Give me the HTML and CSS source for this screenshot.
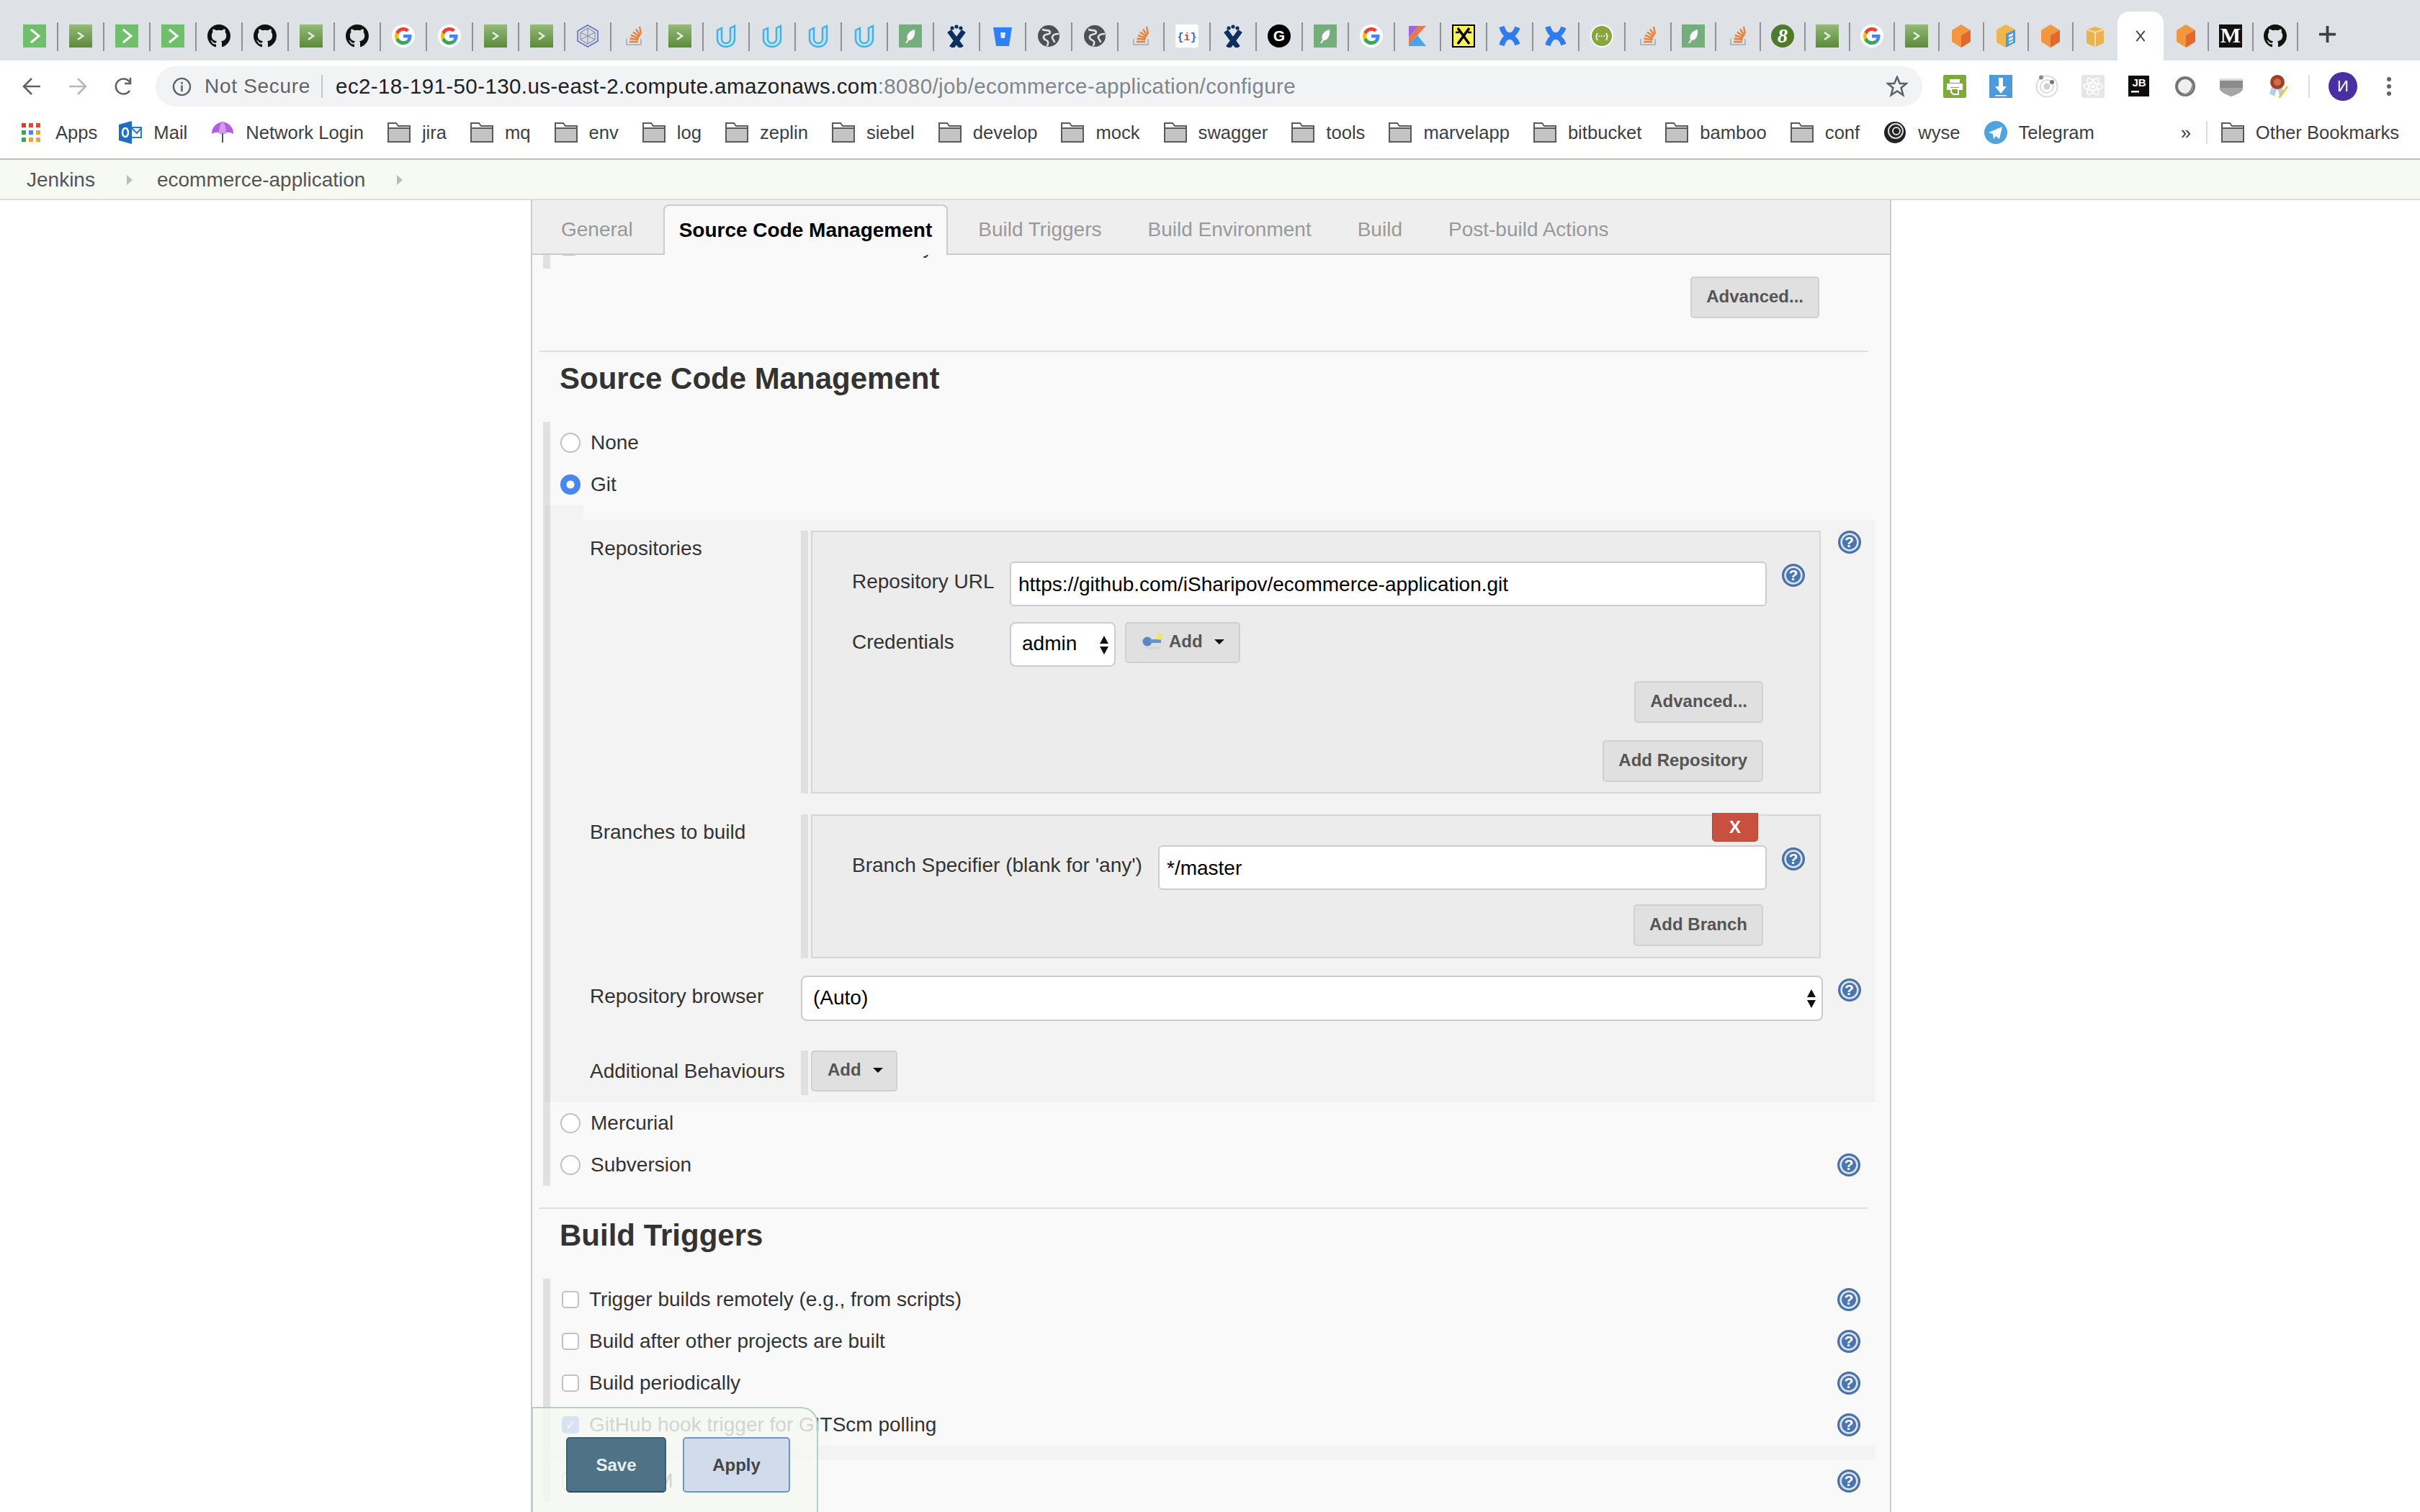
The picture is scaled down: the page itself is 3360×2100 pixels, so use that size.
FILE: index.html
```html
<!DOCTYPE html>
<html lang="en">
<head>
  <meta charset="UTF-8" />
  <title>ecommerce-application Config [Jenkins]</title>
  <link rel="stylesheet" href="styles.css">
</head>
<body>
  <svg class="defs" xmlns="http://www.w3.org/2000/svg">
    <defs>
      <linearGradient id="olive" x1="0" y1="0" x2="0" y2="1"><stop offset="0" stop-color="#93ba76"/><stop offset="1" stop-color="#5a8a3a"/></linearGradient>
    </defs>
    <symbol id="i-prompt" viewBox="0 0 32 32"><rect width="32" height="32" fill="#70bf6c"/><path d="M11 7l11 9-11 9" fill="none" stroke="#fff" stroke-width="3"/></symbol>
    <symbol id="i-olive" viewBox="0 0 32 32"><rect width="32" height="32" fill="url(#olive)"/><path d="M12 11l7 5-7 5" fill="none" stroke="#e4edda" stroke-width="2.6"/></symbol>
    <symbol id="i-github" viewBox="0 0 16 16"><path fill="#111" d="M8 0C3.58 0 0 3.58 0 8c0 3.54 2.29 6.53 5.47 7.59.4.07.55-.17.55-.38 0-.19-.01-.82-.01-1.49-2.01.37-2.53-.49-2.69-.94-.09-.23-.48-.94-.82-1.13-.28-.15-.68-.52-.01-.53.63-.01 1.08.58 1.23.82.72 1.21 1.87.87 2.33.66.07-.52.28-.87.51-1.07-1.78-.2-3.64-.89-3.64-3.95 0-.87.31-1.59.82-2.15-.08-.2-.36-1.02.08-2.12 0 0 .67-.21 2.2.82.64-.18 1.32-.27 2-.27.68 0 1.36.09 2 .27 1.53-1.04 2.2-.82 2.2-.82.44 1.1.16 1.92.08 2.12.51.56.82 1.27.82 2.15 0 3.07-1.87 3.75-3.65 3.95.29.25.54.73.54 1.48 0 1.07-.01 1.93-.01 2.2 0 .21.15.46.55.38A8.013 8.013 0 0016 8c0-4.42-3.58-8-8-8z"/></symbol>
    <symbol id="i-google" viewBox="0 0 32 32"><circle cx="16" cy="16" r="16" fill="#fff"/><g transform="translate(4 4) scale(.5)"><path fill="#EA4335" d="M24 9.5c3.54 0 6.71 1.22 9.21 3.6l6.85-6.85C35.9 2.38 30.47 0 24 0 14.62 0 6.51 5.38 2.56 13.22l7.98 6.19C12.43 13.72 17.74 9.5 24 9.5z"/><path fill="#4285F4" d="M46.98 24.55c0-1.57-.15-3.09-.38-4.55H24v9.02h12.94c-.58 2.96-2.26 5.48-4.78 7.18l7.73 6c4.51-4.18 7.09-10.36 7.09-17.65z"/><path fill="#FBBC05" d="M10.53 28.59c-.48-1.45-.76-2.99-.76-4.59s.27-3.14.76-4.59l-7.98-6.19C.92 16.46 0 20.12 0 24c0 3.88.92 7.54 2.56 10.78l7.97-6.19z"/><path fill="#34A853" d="M24 48c6.48 0 11.93-2.13 16.09-5.81l-7.73-6c-2.15 1.45-4.92 2.3-8.36 2.3-6.26 0-11.57-4.22-13.47-9.91l-7.98 6.19C6.51 42.62 14.62 48 24 48z"/></g></symbol>
    <symbol id="i-hex" viewBox="0 0 32 32"><path d="M16 1l14 8v14l-14 8-14-8V9z" fill="#d9dde6" stroke="#5f74c4" stroke-width="1.6"/><path d="M16 5l10 6v10l-10 6-10-6V11zM16 5v22M6 11l20 10M26 11L6 21" fill="none" stroke="#8d93a8" stroke-width="1.2"/></symbol>
    <symbol id="i-so" viewBox="0 0 32 32"><path d="M6 20v8h20v-8" fill="none" stroke="#b5b5b5" stroke-width="2"/><path d="M10 24h12M10.5 19.5l12 1.5M12 15l11 4M15 10.5l9 6.5M19 6.5l6 9M24 3l2 10" fill="none" stroke="#e8823a" stroke-width="2.4"/></symbol>
    <symbol id="i-udacity" viewBox="0 0 32 32"><path d="M4 8l6-3v15c0 4 3 6 6 6s6-2 6-6V5l6-3v18c0 7-6 11-12 11S4 27 4 20z" fill="#bfe4f5" stroke="#45b0e2" stroke-width="2.4"/></symbol>
    <symbol id="i-leaf" viewBox="0 0 32 32"><rect width="32" height="32" fill="#75ad7c"/><path d="M22 7c-8 2-12 8-10 14l-3 5h2l3-4c6 0 9-7 8-15z" fill="#fff"/></symbol>
    <symbol id="i-jira" viewBox="0 0 32 32"><circle cx="10" cy="5" r="2.6" fill="#0c2f63"/><circle cx="16" cy="3" r="2.6" fill="#0c2f63"/><circle cx="22" cy="5" r="2.6" fill="#0c2f63"/><path d="M6 9l17 23M26 9L9 32" stroke="#0c2f63" stroke-width="7" fill="none"/><path d="M12 10h8l-4 6z" fill="#dee1e6"/></symbol>
    <symbol id="i-bitbucket" viewBox="0 0 32 32"><path d="M3 4h26l-4 26H7z" fill="#2f80f6"/><path d="M13 11h7l-1 8h-5z" fill="#dfe8fb"/></symbol>
    <symbol id="i-globe" viewBox="0 0 32 32"><circle cx="16" cy="16" r="15" fill="#4d5156"/><path d="M7 7c6 2 11 0 11 4s-8 1-9 6 5 4 6 7-1 4-1 6M30 13c-4 0-8 1-9 4s3 4 3 8" fill="none" stroke="#dee1e6" stroke-width="2.6"/></symbol>
    <symbol id="i-kotlin" viewBox="0 0 32 32"><path d="M4 2h14L4 18z" fill="#9a66d8"/><path d="M18 2h10L4 28V18z" fill="#e8774a"/><path d="M16 15l12 15H4V28z" fill="#42a5f0"/></symbol>
    <symbol id="i-yellow" viewBox="0 0 32 32"><rect width="32" height="32" fill="#000"/><rect x="2" y="2" width="28" height="28" fill="#fff25a"/><path d="M8 5l16 22M24 5L8 27" stroke="#000" stroke-width="3.4"/><path d="M5 11h5M22 11h5" stroke="#000" stroke-width="2.4"/></symbol>
    <symbol id="i-confluence" viewBox="0 0 32 32"><path d="M5 3c2 7 6 12 11 12s9-5 11-11M5 29c2-7 6-12 11-12s9 5 11 11" fill="none" stroke="#2f7bf0" stroke-width="7.5"/></symbol>
    <symbol id="i-cube" viewBox="0 0 32 32"><path d="M16 0l13 8v16l-13 8-13-8V8z" fill="#f2973f"/><path d="M16 15l13-7v16l-13 8z" fill="#e2692d"/></symbol>
    <symbol id="i-box" viewBox="0 0 32 32"><path d="M16 0l13 7v18l-13 7-13-7V7z" fill="#efb64f"/><path d="M16 13l13-6v18l-13 7z" fill="#4a9be0"/><path d="M20 15l6-3v3l-6 3zM20 20l6-3v3l-6 3zM20 25l6-3v2l-6 3z" fill="#fff"/></symbol>
    <symbol id="i-barrel" viewBox="0 0 32 32"><path d="M16 3l12 4v19l-12 5-12-5V7z" fill="#ecb24f"/><path d="M4 7l12 4 12-4M16 11v20" fill="none" stroke="#f7dc9c" stroke-width="2"/></symbol>
    <symbol id="i-folder" viewBox="0 0 32 32"><path d="M1 29V3h11l3 4h16v22z" fill="#fff" stroke="#5a5a5a" stroke-width="2"/><path d="M2 11h28v17H2z" fill="#c4c4c4"/><path d="M1 10h30" stroke="#5a5a5a" stroke-width="2"/></symbol>
  </svg>

  <div class="tabstrip">
    <div class="tab"><svg class="fav"><use href="#i-prompt"/></svg></div>
    <div class="tab"><svg class="fav"><use href="#i-olive"/></svg></div>
    <div class="tab"><svg class="fav"><use href="#i-prompt"/></svg></div>
    <div class="tab"><svg class="fav"><use href="#i-prompt"/></svg></div>
    <div class="tab"><svg class="fav"><use href="#i-github"/></svg></div>
    <div class="tab"><svg class="fav"><use href="#i-github"/></svg></div>
    <div class="tab"><svg class="fav"><use href="#i-olive"/></svg></div>
    <div class="tab"><svg class="fav"><use href="#i-github"/></svg></div>
    <div class="tab"><svg class="fav"><use href="#i-google"/></svg></div>
    <div class="tab"><svg class="fav"><use href="#i-google"/></svg></div>
    <div class="tab"><svg class="fav"><use href="#i-olive"/></svg></div>
    <div class="tab"><svg class="fav"><use href="#i-olive"/></svg></div>
    <div class="tab"><svg class="fav"><use href="#i-hex"/></svg></div>
    <div class="tab"><svg class="fav"><use href="#i-so"/></svg></div>
    <div class="tab"><svg class="fav"><use href="#i-olive"/></svg></div>
    <div class="tab"><svg class="fav"><use href="#i-udacity"/></svg></div>
    <div class="tab"><svg class="fav"><use href="#i-udacity"/></svg></div>
    <div class="tab"><svg class="fav"><use href="#i-udacity"/></svg></div>
    <div class="tab"><svg class="fav"><use href="#i-udacity"/></svg></div>
    <div class="tab"><svg class="fav"><use href="#i-leaf"/></svg></div>
    <div class="tab"><svg class="fav"><use href="#i-jira"/></svg></div>
    <div class="tab"><svg class="fav"><use href="#i-bitbucket"/></svg></div>
    <div class="tab"><svg class="fav"><use href="#i-globe"/></svg></div>
    <div class="tab"><svg class="fav"><use href="#i-globe"/></svg></div>
    <div class="tab"><svg class="fav"><use href="#i-so"/></svg></div>
    <div class="tab"><svg class="fav" viewBox="0 0 32 32"><rect width="32" height="32" rx="3" fill="#fff"/><text x="16" y="22" text-anchor="middle" class="svg-mono" fill="#2b6db3">{<tspan fill="#d8413c">i</tspan>}</text></svg></div>
    <div class="tab"><svg class="fav"><use href="#i-jira"/></svg></div>
    <div class="tab"><svg class="fav" viewBox="0 0 32 32"><circle cx="16" cy="16" r="16" fill="#000"/><text x="16" y="23" text-anchor="middle" class="svg-sans" fill="#fff">G</text></svg></div>
    <div class="tab"><svg class="fav"><use href="#i-leaf"/></svg></div>
    <div class="tab"><svg class="fav"><use href="#i-google"/></svg></div>
    <div class="tab"><svg class="fav"><use href="#i-kotlin"/></svg></div>
    <div class="tab"><svg class="fav"><use href="#i-yellow"/></svg></div>
    <div class="tab"><svg class="fav"><use href="#i-confluence"/></svg></div>
    <div class="tab"><svg class="fav"><use href="#i-confluence"/></svg></div>
    <div class="tab"><svg class="fav" viewBox="0 0 32 32"><circle cx="16" cy="16" r="16" fill="#fff"/><circle cx="16" cy="16" r="14" fill="#8aa53c"/><text x="16" y="20" text-anchor="middle" class="svg-small" fill="#fff">{···}</text></svg></div>
    <div class="tab"><svg class="fav"><use href="#i-so"/></svg></div>
    <div class="tab narrow"><svg class="fav"><use href="#i-leaf"/></svg></div>
    <div class="tab narrow"><svg class="fav"><use href="#i-so"/></svg></div>
    <div class="tab narrow"><svg class="fav" viewBox="0 0 32 32"><circle cx="16" cy="16" r="16" fill="#4f7a2b"/><text x="16" y="25" text-anchor="middle" class="svg-serif" fill="#fff">8</text></svg></div>
    <div class="tab narrow"><svg class="fav"><use href="#i-olive"/></svg></div>
    <div class="tab narrow"><svg class="fav"><use href="#i-google"/></svg></div>
    <div class="tab narrow"><svg class="fav"><use href="#i-olive"/></svg></div>
    <div class="tab narrow"><svg class="fav"><use href="#i-cube"/></svg></div>
    <div class="tab narrow"><svg class="fav"><use href="#i-box"/></svg></div>
    <div class="tab narrow"><svg class="fav"><use href="#i-cube"/></svg></div>
    <div class="tab narrow nosep"><svg class="fav"><use href="#i-barrel"/></svg></div>
    <div class="tab-active"><svg class="close" viewBox="0 0 20 20"><path d="M3 1l14 18M17 1L3 19" stroke="#45494e" stroke-width="2.4"/></svg></div>
    <div class="tab narrow"><svg class="fav"><use href="#i-cube"/></svg></div>
    <div class="tab narrow"><svg class="fav" viewBox="0 0 32 32"><rect width="32" height="32" fill="#111"/><text x="16" y="25" text-anchor="middle" class="svg-m" fill="#fff">M</text></svg></div>
    <div class="tab narrow"><svg class="fav"><use href="#i-github"/></svg></div>
    <svg class="newtab" viewBox="0 0 24 24"><path d="M12 1v22M1 12h22" stroke="#3c4043" stroke-width="3.6"/></svg>
  </div>

  <div class="toolbar">
    <div class="navbtn"><svg viewBox="0 0 26 26"><path d="M25 13H3M13 2L2 13l11 11" fill="none" stroke="#5f6368" stroke-width="2.6"/></svg></div>
    <div class="navbtn"><svg viewBox="0 0 26 26"><path d="M1 13h22M13 2l11 11-11 11" fill="none" stroke="#b6b8bb" stroke-width="2.6"/></svg></div>
    <div class="navbtn"><svg viewBox="0 0 26 26"><path d="M21 19a10.500 10.500 0 1 1 0-12M22 1v8h-8" fill="none" stroke="#5f6368" stroke-width="2.6"/></svg></div>
    <div class="omnibox">
      <svg class="omni-info" viewBox="0 0 28 28"><circle cx="14" cy="14" r="12" fill="none" stroke="#5f6368" stroke-width="2.4"/><path d="M14 12v9M14 7v3" stroke="#5f6368" stroke-width="2.6"/></svg>
      <span class="omni-state">Not Secure</span>
      <span class="omni-sep"></span>
      <span class="omni-url">ec2-18-191-50-130.us-east-2.compute.amazonaws.com<span class="omni-path">:8080/job/ecommerce-application/configure</span></span>
      <svg class="omni-star" viewBox="0 0 30 30"><path d="M15 2l3.800 9h9.200l-7.400 6 2.700 10L15 21.500 6.700 27l2.700-10L2 11h9.200z" fill="none" stroke="#5f6368" stroke-width="2.6"/></svg>
    </div>
    <div class="ext"><svg viewBox="0 0 32 32"><rect width="32" height="32" rx="2" fill="#7eaa37"/><path d="M9 6h14v5H9zM5 12h22v9h-5v-4H10v4H5z" fill="#fff"/><path d="M11 19h10v8h-7l-3-3z" fill="none" stroke="#fff" stroke-width="2"/></svg></div>
    <div class="ext"><svg viewBox="0 0 32 32"><rect width="32" height="32" fill="#4d9bdc"/><path d="M13 4h6v12h5l-8 10-8-10h5zM8 28h16v1.500H8z" fill="#fff"/></svg></div>
    <div class="ext"><svg viewBox="0 0 32 32"><circle cx="16" cy="16" r="14.500" fill="none" stroke="#dcdcdc" stroke-width="2"/><circle cx="16" cy="16" r="9" fill="none" stroke="#dcdcdc" stroke-width="2"/><circle cx="16" cy="16" r="4.500" fill="#d0d0d0"/><circle cx="8" cy="3.500" r="3" fill="#8a8a8a"/><circle cx="23" cy="10" r="3" fill="#777"/></svg></div>
    <div class="ext"><svg viewBox="0 0 32 32"><rect width="32" height="32" rx="2" fill="#e6e6e6"/><g fill="none" stroke="#fff" stroke-width="1.600"><ellipse cx="16" cy="16" rx="13" ry="5"/><ellipse cx="16" cy="16" rx="13" ry="5" transform="rotate(60 16 16)"/><ellipse cx="16" cy="16" rx="13" ry="5" transform="rotate(120 16 16)"/></g><circle cx="16" cy="16" r="2.500" fill="#fff"/></svg></div>
    <div class="ext"><svg viewBox="0 0 32 32"><rect x="1" y="1" width="29" height="29" fill="#0c0c0c"/><text x="16" y="16" text-anchor="middle" class="svg-jb" fill="#fff">JB</text><rect x="5" y="22" width="11" height="2.500" fill="#fff"/></svg></div>
    <div class="ext"><svg viewBox="0 0 32 32"><circle cx="16" cy="16" r="12" fill="#efefef" stroke="#747474" stroke-width="4"/><path d="M26 10a12 12 0 0 1-15 17c8 1 14-6 15-17z" fill="#8f8f8f"/></svg></div>
    <div class="ext"><svg viewBox="0 0 32 32"><path d="M0 5h32v14c0 4-8 8-16 11C8 27 0 23 0 19z" fill="#8c8c8c"/><path d="M0 5h32v3H0z" fill="#dcdcdc"/><path d="M0 18h32c0 5-8 9-16 12C8 27 0 23 0 18z" fill="#a6a6a6"/></svg></div>
    <div class="ext"><svg viewBox="0 0 32 32"><path d="M5 26l4-12 6 6-3 10zM22 16l3 8-6 5-3-10z" fill="#b9cde6"/><circle cx="16" cy="10" r="10" fill="#a33f22"/><circle cx="16" cy="10" r="5" fill="#c9714f"/><path d="M18 30l11-15 2 2-11 15-3 1z" fill="#efc33c"/></svg></div>
    <span class="tool-sep"></span>
    <span class="avatar">И</span>
    <svg class="dots" viewBox="0 0 6 28"><circle cx="3" cy="4" r="3" fill="#5f6368"/><circle cx="3" cy="14" r="3" fill="#5f6368"/><circle cx="3" cy="24" r="3" fill="#5f6368"/></svg>
  </div>

  <div class="bookmarks">
    <span class="bm bm-first"><svg class="bm-apps" viewBox="0 0 27 27"><path d="M0 0h6v6H0z" fill="#d93a2e"/><path d="M10 0h6v6h-6zM20 0h6v6h-6z" fill="#e0483a"/><path d="M0 10h6v6H0z" fill="#34a853"/><path d="M10 10h6v6h-6z" fill="#4285f4"/><path d="M20 10h6v6h-6z" fill="#f0a030"/><path d="M0 20h6v6H0z" fill="#34a853"/><path d="M10 20h6v6h-6z" fill="#f0a030"/><path d="M20 20h6v6h-6z" fill="#e8a640"/></svg>Apps</span>
    <span class="bm"><svg class="bm-ico" viewBox="0 0 32 32"><path d="M0 5l18-5v32L0 27z" fill="#1f6ec4"/><ellipse cx="9" cy="16" rx="4" ry="6" fill="none" stroke="#fff" stroke-width="2.600"/><path d="M18 9h13v14H18" fill="#fff" stroke="#2a7ad2" stroke-width="2"/><path d="M18 10l7 7 6-7" fill="none" stroke="#2a7ad2" stroke-width="2"/></svg>Mail</span>
    <span class="bm"><svg class="bm-ico" viewBox="0 0 32 32"><path d="M16 1C6 3 1 9 1 18c5-3 10-3 15 0 5-3 10-3 15 0 0-9-5-15-15-17z" fill="#b45ce8"/><path d="M16 1c-4 3-5 10-5 17h10c0-7-1-14-5-17z" fill="#d798f2"/><path d="M16 17v13" stroke="#555" stroke-width="2"/></svg>Network Login</span>
    <span class="bm"><svg class="bm-ico"><use href="#i-folder"/></svg>jira</span>
    <span class="bm"><svg class="bm-ico"><use href="#i-folder"/></svg>mq</span>
    <span class="bm"><svg class="bm-ico"><use href="#i-folder"/></svg>env</span>
    <span class="bm"><svg class="bm-ico"><use href="#i-folder"/></svg>log</span>
    <span class="bm"><svg class="bm-ico"><use href="#i-folder"/></svg>zeplin</span>
    <span class="bm"><svg class="bm-ico"><use href="#i-folder"/></svg>siebel</span>
    <span class="bm"><svg class="bm-ico"><use href="#i-folder"/></svg>develop</span>
    <span class="bm"><svg class="bm-ico"><use href="#i-folder"/></svg>mock</span>
    <span class="bm"><svg class="bm-ico"><use href="#i-folder"/></svg>swagger</span>
    <span class="bm"><svg class="bm-ico"><use href="#i-folder"/></svg>tools</span>
    <span class="bm"><svg class="bm-ico"><use href="#i-folder"/></svg>marvelapp</span>
    <span class="bm"><svg class="bm-ico"><use href="#i-folder"/></svg>bitbucket</span>
    <span class="bm"><svg class="bm-ico"><use href="#i-folder"/></svg>bamboo</span>
    <span class="bm"><svg class="bm-ico"><use href="#i-folder"/></svg>conf</span>
    <span class="bm"><svg class="bm-ico" viewBox="0 0 32 32"><circle cx="16" cy="16" r="15" fill="#222"/><circle cx="17" cy="14" r="10" fill="none" stroke="#ddd" stroke-width="2"/><circle cx="18" cy="14" r="5" fill="none" stroke="#ddd" stroke-width="2"/></svg>wyse</span>
    <span class="bm"><svg class="bm-ico" viewBox="0 0 32 32"><circle cx="16" cy="16" r="16" fill="#4ea4de"/><path d="M25 8L6 16l6 2 1 7 3-4 5 4z" fill="#fff"/></svg>Telegram</span>
    <span class="bm-more">»</span>
    <span class="bm-sep"></span>
    <span class="bm"><svg class="bm-ico"><use href="#i-folder"/></svg>Other Bookmarks</span>
  </div>

  <div class="breadcrumbs">
    <a class="crumb">Jenkins</a><span class="crumb-arrow"></span>
    <a class="crumb">ecommerce-application</a><span class="crumb-arrow"></span>
  </div>

  <div class="page">
    <div class="config-tabs">
      <span class="config-tab">General</span>
      <span class="config-tab active">Source Code Management</span>
      <span class="config-tab">Build Triggers</span>
      <span class="config-tab">Build Environment</span>
      <span class="config-tab">Build</span>
      <span class="config-tab">Post-build Actions</span>
    </div>

    <div class="scrolled-off">
      <div class="option scrolled-row"><input type="checkbox" class="cb"><label>Execute concurrent builds if necessary</label></div>
    </div>
    <div class="adv-row"><button class="btn">Advanced...</button></div>

    <div class="section-head"><h2>Source Code Management</h2></div>
    <div class="section">
      <div class="option"><input type="radio" class="rb"><label>None</label></div>
      <div class="option"><input type="radio" class="rb" checked><label>Git</label></div>
      <div class="git-block">
        <div class="git-row repo-row">
          <div class="git-label top">Repositories</div>
          <div class="repeat boxed">
            <div class="repeat-box">
              <div class="field-row first">
                <label class="field-label">Repository URL</label>
                <input class="text" value="https://github.com/iSharipov/ecommerce-application.git">
                <span class="help inner">?</span>
              </div>
              <div class="field-row cred">
                <label class="field-label">Credentials</label>
                <div class="select-wrap small">
                  <select class="sel"><option>admin</option></select>
                  <svg class="updown" viewBox="0 0 12 28"><path d="M6 1l6 11H0zM6 27L0 16h12z" fill="#111"/></svg>
                </div>
                <button class="btn btn-add with-key">
                  <svg class="key" viewBox="0 0 30 24"><ellipse cx="15" cy="21" rx="11" ry="2" fill="#d6d6d6"/><circle cx="7" cy="12" r="6.500" fill="#5c84bf"/><path d="M10 9h16v5H10z" fill="#6a93cc"/><circle cx="24" cy="5" r="4.500" fill="#f4e36c"/></svg>
                  Add<i class="caret"></i>
                </button>
              </div>
              <div class="btn-line"><button class="btn">Advanced...</button></div>
              <div class="btn-line"><button class="btn">Add Repository</button></div>
            </div>
          </div>
          <span class="help">?</span>
        </div>

        <div class="git-row branch-row">
          <div class="git-label top">Branches to build</div>
          <div class="repeat boxed">
            <div class="repeat-box">
              <button class="btn-x">X</button>
              <div class="field-row first">
                <label class="field-label">Branch Specifier (blank for 'any')</label>
                <input class="text" value="*/master">
                <span class="help inner">?</span>
              </div>
              <div class="btn-line"><button class="btn">Add Branch</button></div>
            </div>
          </div>
        </div>

        <div class="git-row browser-row">
          <div class="git-label">Repository browser</div>
          <div class="select-wrap">
            <select class="sel"><option>(Auto)</option></select>
            <svg class="updown" viewBox="0 0 12 28"><path d="M6 1l6 11H0zM6 27L0 16h12z" fill="#111"/></svg>
          </div>
          <span class="help shifted">?</span>
        </div>

        <div class="git-row behaviours-row">
          <div class="git-label">Additional Behaviours</div>
          <div class="repeat"><button class="btn btn-add">Add<i class="caret"></i></button></div>
        </div>
      </div>
      <div class="option"><input type="radio" class="rb"><label>Mercurial</label></div>
      <div class="option"><input type="radio" class="rb"><label>Subversion</label><span class="help">?</span></div>
    </div>

    <div class="section-head second"><h2>Build Triggers</h2></div>
    <div class="section">
      <div class="option check"><input type="checkbox" class="cb"><label>Trigger builds remotely (e.g., from scripts)</label><span class="help">?</span></div>
      <div class="option check"><input type="checkbox" class="cb"><label>Build after other projects are built</label><span class="help">?</span></div>
      <div class="option check"><input type="checkbox" class="cb"><label>Build periodically</label><span class="help">?</span></div>
      <div class="option check"><input type="checkbox" class="cb" checked><label>GitHub hook trigger for GITScm polling</label><span class="help">?</span></div>
      <div class="collapsed-bar"></div>
      <div class="option check"><input type="checkbox" class="cb"><label>Poll SCM</label><span class="help">?</span></div>
    </div>

    <div class="bottom-sticker">
      <button class="btn-save">Save</button>
      <button class="btn-apply">Apply</button>
    </div>
  </div>
</body>
</html>
```

FILE: styles.css
```css
* {
  box-sizing: border-box;
}
html, body {
  margin: 0;
  height: 2100px;
  overflow: hidden;
}
body {
  font-family: "Liberation Sans", Arial, sans-serif;
  font-size: 28px;
  color: #333;
  background: #fff;
}
.defs {
  width: 0;
  height: 0;
  position: absolute;
}
.svg-mono { font: 700 15px "Liberation Mono", monospace; }
.svg-sans { font: 700 21px "Liberation Sans", sans-serif; }
.svg-small { font: 700 10px "Liberation Sans", sans-serif; }
.svg-serif { font: italic 700 28px "Liberation Serif", serif; }
.svg-m { font: 700 30px "Liberation Serif", serif; }
.svg-jb { font: 700 15px "Liberation Sans", sans-serif; }

/* browser chrome */
.tabstrip {
  height: 84px;
  background: #dee1e6;
  display: flex;
  align-items: flex-end;
  padding-left: 16px;
}
.tab {
  width: 64px;
  height: 68px;
  position: relative;
  display: flex;
  justify-content: center;
  padding-top: 18px;
}
.tab.narrow {
  width: 62px;
}
.tab::after {
  content: "";
  position: absolute;
  right: -1px;
  top: 15px;
  width: 2px;
  height: 40px;
  background: #909398;
}
.tab.nosep::after {
  display: none;
}
.fav {
  width: 32px;
  height: 32px;
}
.tab-active {
  width: 64px;
  height: 68px;
  background: #fff;
  border-radius: 16px 16px 0 0;
  display: flex;
  justify-content: center;
  padding-top: 26px;
}
.close {
  width: 16px;
  height: 16px;
}
.newtab {
  width: 25px;
  height: 25px;
  margin: 0 0 24px 29px;
}
.toolbar {
  height: 72px;
  background: #fff;
  display: flex;
  align-items: center;
  padding-left: 12px;
}
.navbtn {
  width: 64px;
  height: 56px;
  display: flex;
  align-items: center;
  justify-content: center;
}
.navbtn svg {
  width: 26px;
  height: 26px;
}
.omnibox {
  width: 2453px;
  height: 56px;
  margin-left: 12px;
  margin-right: 13px;
  background: #f1f3f4;
  border-radius: 28px;
  display: flex;
  align-items: center;
  padding: 0 20px 0 23px;
  flex: none;
}
.omni-info {
  width: 27px;
  height: 27px;
}
.omni-state {
  margin-left: 18px;
  color: #5f6368;
  letter-spacing: .7px;
}
.omni-sep {
  width: 2px;
  height: 32px;
  background: #c4c7ca;
  margin: 0 18px 0 15px;
}
.omni-url {
  color: #202124;
  font-size: 29.5px;
  letter-spacing: .4px;
}
.omni-path {
  color: #80868b;
}
.omni-star {
  width: 30px;
  height: 30px;
  margin-left: auto;
}
.ext {
  width: 64px;
  height: 32px;
  display: flex;
  justify-content: center;
  flex: none;
}
.ext svg {
  width: 32px;
  height: 32px;
}
.tool-sep {
  width: 2px;
  height: 32px;
  background: #dadce0;
  margin: 0 26px 0 11px;
}
.avatar {
  width: 40px;
  height: 40px;
  border-radius: 50%;
  background: #4a2ea4;
  color: #fff;
  font-size: 22px;
  display: flex;
  align-items: center;
  justify-content: center;
}
.dots {
  width: 6px;
  height: 28px;
  margin-left: 41px;
}
.bookmarks {
  height: 66px;
  background: #fff;
  border-bottom: 2px solid #bdbdbd;
  display: flex;
  align-items: center;
  padding: 0 0 8px 30px;
  font-size: 25.6px;
  color: #3c4043;
  white-space: nowrap;
}
.bm {
  display: flex;
  align-items: center;
  margin-right: 33px;
}
.bm-first {
  margin-right: 30px;
}
.bm-ico {
  width: 32px;
  height: 32px;
  margin-right: 16px;
}
.bm-apps {
  width: 27px;
  height: 27px;
  margin-right: 20px;
}
.bm-more {
  margin: 0 21px 0 auto;
}
.bm-sep {
  width: 2px;
  height: 32px;
  background: #dadce0;
  margin-right: 19px;
}
.bm:last-child {
  margin-right: 29px;
}
.breadcrumbs {
  height: 56px;
  background: #f7f9f3;
  border-bottom: 2px solid #dcdcdc;
  display: flex;
  align-items: center;
  padding-left: 37px;
  padding-top: 2px;
}
.crumb {
  color: #555;
}
.crumb-arrow {
  width: 0;
  height: 0;
  border-left: 8px solid #bbb;
  border-top: 7px solid transparent;
  border-bottom: 7px solid transparent;
  margin: 0 34px 0 44px;
}

/* config page */
.page {
  position: relative;
  width: 1889px;
  height: 1822px;
  margin-left: 737px;
  background: #f9f9f9;
  border-left: 2px solid #ccc;
  border-right: 2px solid #ccc;
  overflow: hidden;
}
.config-tabs {
  height: 76px;
  background: #eee;
  border-bottom: 2px solid #ccc;
  display: flex;
  gap: 20px;
  padding: 6px 0 0 18px;
}
.config-tab {
  height: 68px;
  padding: 0 22px;
  line-height: 70px;
  color: #999;
  white-space: nowrap;
}
.config-tab.active {
  height: 70px;
  background: #f9f9f9;
  color: #000;
  font-weight: 700;
  border: 2px solid #ccc;
  border-bottom: none;
  border-radius: 8px 8px 0 0;
  padding: 0 20px;
  line-height: 68px;
}
.scrolled-off {
  height: 19px;
  margin-left: 15px;
  border-left: 10px solid #e0e0e0;
  overflow: hidden;
}
.scrolled-row {
  margin-top: -40px;
}
.adv-row {
  height: 114px;
  padding: 11px 98px 0 0;
  display: flex;
  justify-content: flex-end;
  align-items: flex-start;
}
.section-head {
  margin-left: 9px;
  width: 1845px;
  height: 99px;
  border-top: 2px solid #e0e0e0;
}
.section-head.second {
  margin-top: 30px;
}
.section-head h2 {
  margin: 0;
  padding-left: 29px;
  font-size: 42px;
  line-height: 74px;
  color: #333;
  font-weight: 700;
}
.section {
  margin-left: 15px;
  width: 1850px;
  border-left: 10px solid #e0e0e0;
}
.option {
  height: 58px;
  display: flex;
  align-items: center;
  padding-left: 14px;
}
.option label {
  margin-left: 14px;
  white-space: nowrap;
}
.option .help {
  margin-left: auto;
  margin-right: 21px;
}
.option.check {
  padding-left: 16px;
}
.option.check label {
  margin-left: 14px;
}
input.rb {
  appearance: none;
  width: 28px;
  height: 28px;
  margin: 0;
  background: #fff;
  border: 2px solid #c2c2c2;
  border-radius: 50%;
  flex: none;
}
input.rb:checked {
  border: none;
  background: radial-gradient(circle, #fff 0 5px, #4a86f0 6px);
}
input.cb {
  appearance: none;
  position: relative;
  width: 24px;
  height: 24px;
  margin: 0;
  background: #fff;
  border: 2px solid #c2c2c2;
  border-radius: 5px;
  flex: none;
}
input.cb:checked {
  border: none;
  background: #4a86f0;
}
input.cb:checked::after {
  content: "✓";
  position: absolute;
  left: 5px;
  top: 1px;
  color: #fff;
  font: 700 18px "DejaVu Sans", sans-serif;
}
.git-block {
  position: relative;
  margin: 20px 0 0 -7px;
  padding: 15px 0 10px 62px;
  background: rgba(0, 0, 0, .025);
}
.git-block::before {
  content: "";
  position: absolute;
  left: 0;
  top: -20px;
  width: 53px;
  height: 20px;
  background: rgba(0, 0, 0, .025);
}
.git-row {
  display: grid;
  grid-template-columns: 293px 1419px 73px;
  align-items: start;
}
.branch-row {
  margin-top: 29px;
}
.browser-row {
  margin-top: 24px;
}
.behaviours-row {
  margin-top: 41px;
}
.git-label {
  padding-top: 13px;
  line-height: 32px;
  white-space: nowrap;
}
.git-label.top {
  padding-top: 9px;
}
.help {
  width: 32px;
  height: 32px;
  flex: none;
  justify-self: center;
  border-radius: 50%;
  background: radial-gradient(circle, #4a76b0 0 9.500px, #dbe4f0 10.500px 12.200px, #4a72a8 13.200px);
  color: #fff;
  font-size: 21px;
  font-weight: 700;
  line-height: 32px;
  text-align: center;
}
.help.shifted {
  margin-top: 4px;
}
.help.inner {
  margin-left: 21px;
  margin-top: 3px;
}
.repeat {
  border-left: 10px solid #e0e0e0;
  padding-left: 4px;
  height: 62px;
}
.repeat.boxed {
  height: auto;
  margin-right: 3px;
}
.repeat-box {
  position: relative;
  background: #ececec;
  border: 2px solid #d6d6d6;
}
.repo-row .repeat-box {
  height: 365px;
}
.branch-row .repeat-box {
  height: 200px;
}
.field-row {
  display: flex;
  align-items: flex-start;
  padding: 0 20px 0 55px;
}
.field-row.first {
  padding-top: 41px;
}
.field-row.cred {
  padding-top: 22px;
}
.field-label {
  padding: 12px 12px 0 0;
  line-height: 32px;
  white-space: nowrap;
  min-width: 219px;
}
.branch-row .field-label {
  min-width: 425px;
}
input.text {
  flex: 1;
  min-width: 0;
  height: 62px;
  padding: 1px 10px 0;
  font: 28px "Liberation Sans", sans-serif;
  color: #000;
  background: #fff;
  border: 2px solid #ccc;
  border-radius: 6px;
}
.select-wrap {
  position: relative;
  height: 63px;
}
.select-wrap.small {
  width: 147px;
  height: 62px;
}
.sel {
  appearance: none;
  width: 100%;
  height: 100%;
  padding: 0 0 3px 15px;
  font: 28px "Liberation Sans", sans-serif;
  color: #000;
  background: #fff;
  border: 2px solid #ccc;
  border-radius: 8px;
}
.updown {
  position: absolute;
  right: 10px;
  top: 18px;
  width: 12px;
  height: 28px;
}
.btn {
  height: 58px;
  padding: 0 20px 3px;
  font: 700 24px "Liberation Sans", sans-serif;
  color: #555;
  background: #e0e0e0;
  border: 2px solid #d0d0d0;
  border-radius: 5px;
  white-space: nowrap;
}
.btn-line {
  display: flex;
  justify-content: flex-end;
  padding: 20px 78px 0 0;
}
.btn-line + .btn-line {
  padding-top: 24px;
}
.btn-add {
  height: 57px;
  padding: 0 0 3px 21px;
  width: 120px;
  text-align: left;
  display: flex;
  align-items: center;
}
.btn-add.with-key {
  width: 160px;
  margin-left: 13px;
  padding-left: 22px;
}
.key {
  width: 30px;
  height: 24px;
  margin-right: 7px;
}
.caret {
  display: inline-block;
  margin-left: 16px;
  border-top: 7px solid #111;
  border-left: 7px solid transparent;
  border-right: 7px solid transparent;
}
.btn-x {
  position: absolute;
  top: -4px;
  right: 85px;
  width: 64px;
  height: 40px;
  padding: 0;
  font: 700 24px "Liberation Sans", sans-serif;
  color: #fff;
  background: #c9503f;
  border: 1px solid #b64434;
  border-top: none;
  border-radius: 0 0 5px 5px;
}
.collapsed-bar {
  height: 20px;
  margin-left: -7px;
  background: rgba(0, 0, 0, .025);
}
.bottom-sticker {
  position: absolute;
  left: -1px;
  top: 1676px;
  width: 398px;
  height: 180px;
  display: flex;
  gap: 23px;
  padding: 40px 0 0 46px;
  background: rgba(245, 248, 241, .82);
  border: 2px solid #b5cfc0;
  border-radius: 0 24px 0 0;
}
.btn-save, .btn-apply {
  width: 139px;
  height: 77px;
  padding: 0;
  font: 700 24px "Liberation Sans", sans-serif;
  border-radius: 5px;
}
.btn-save {
  color: #e6eef2;
  background: #4e7386;
  border: 2px solid #3f5f70;
  border-bottom-color: #2f4a5a;
}
.btn-apply {
  width: 149px;
  color: #444;
  background: #d0dcec;
  border: 2px solid #6c96c8;
}
```
